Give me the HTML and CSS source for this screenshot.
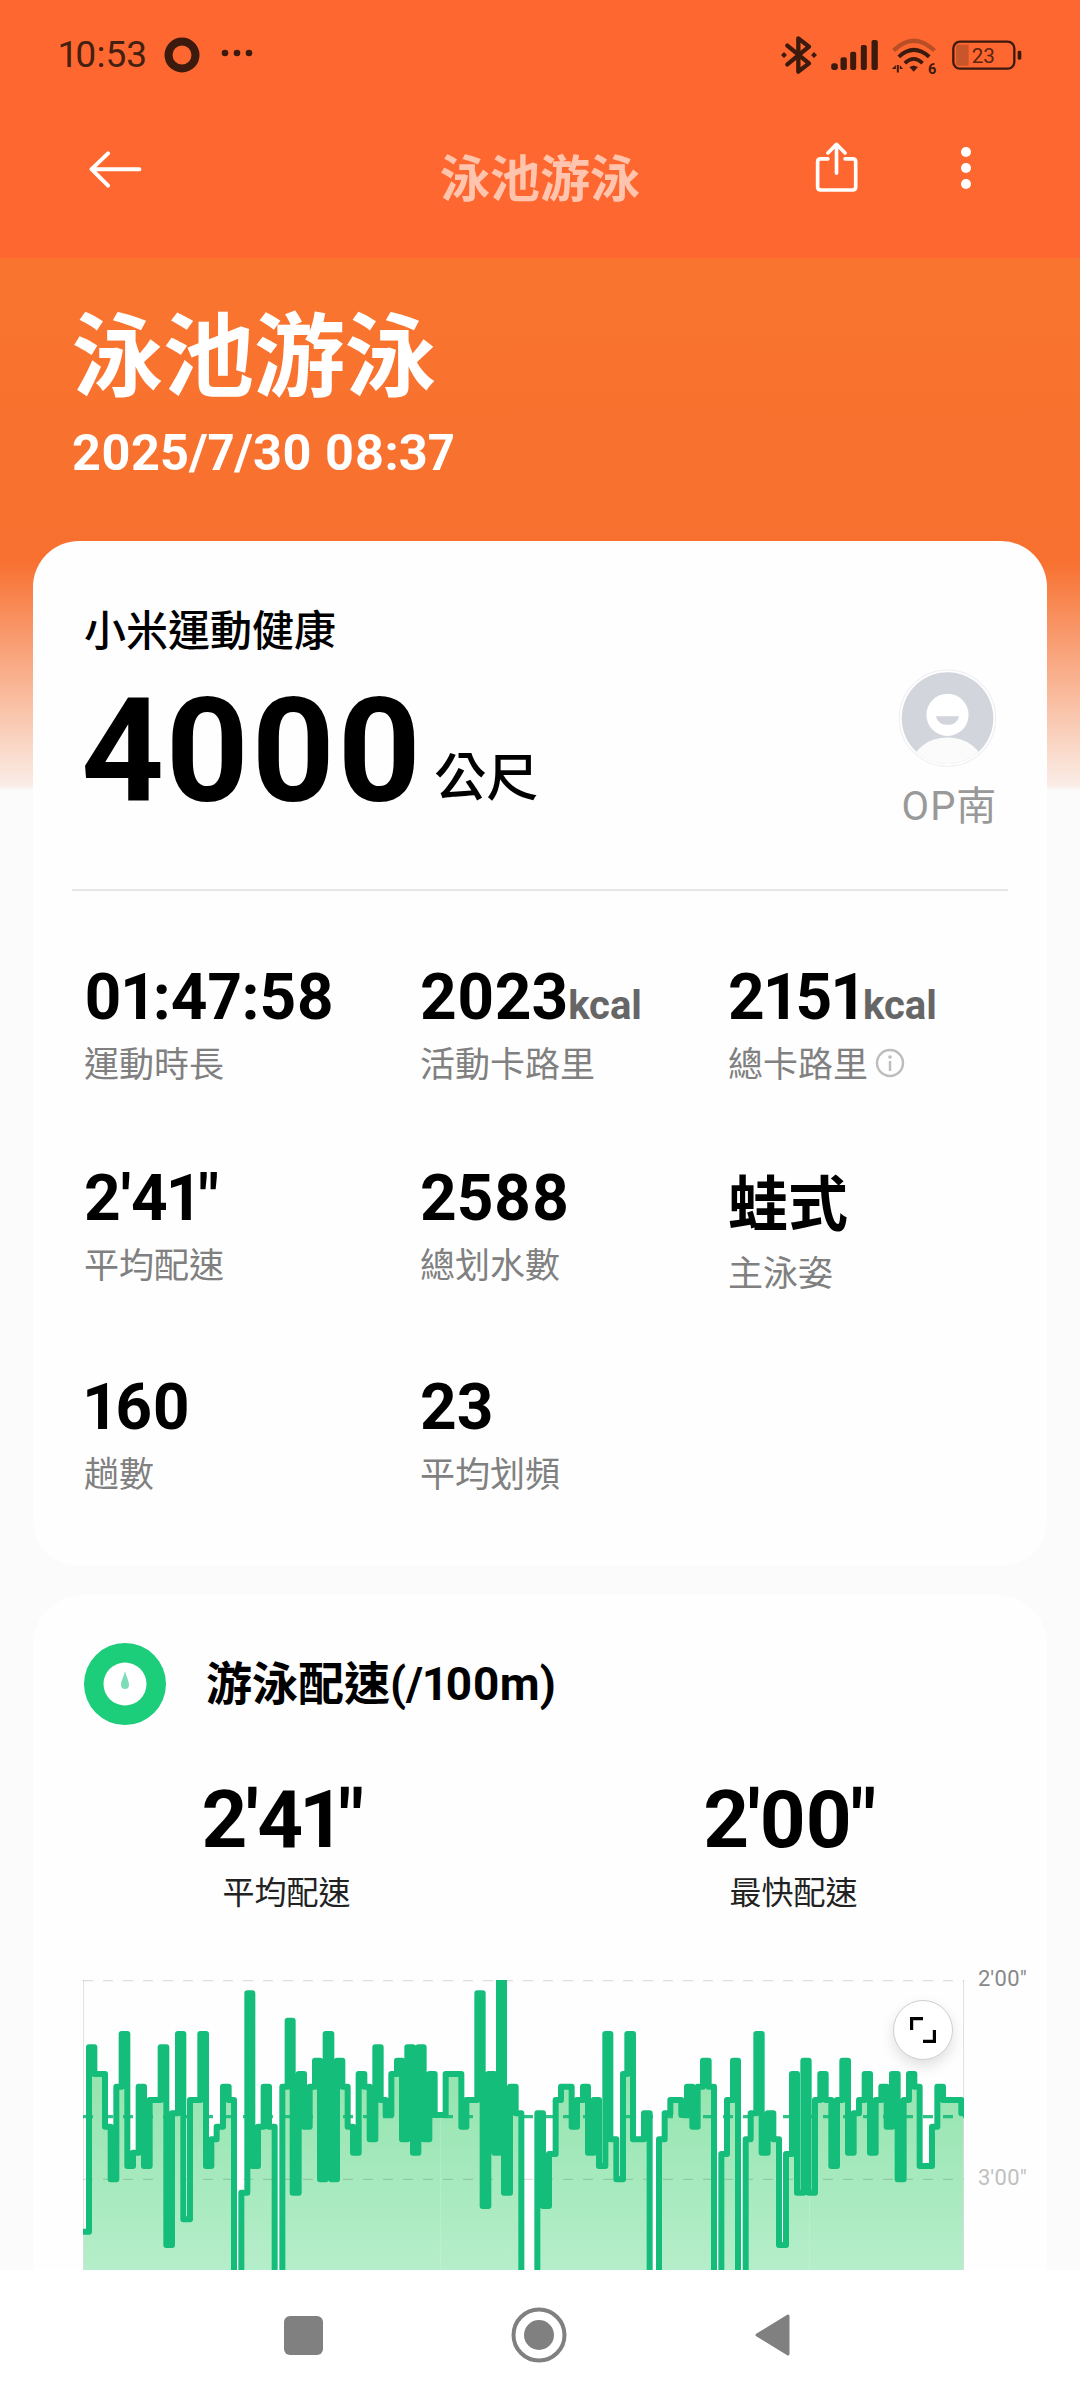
FILE: index.html
```html
<!DOCTYPE html>
<html lang="zh-Hant">
<head>
<meta charset="utf-8">
<title>泳池游泳</title>
<link rel="stylesheet" href="styles.css">
</head>
<body>
<div class="screen">
  <main class="scroll">
    <header class="statusbar">
      <div class="status-left">
        <span class="clock">10:53</span>
        <svg class="ring" viewBox="0 0 36 36"><circle cx="18" cy="18" r="13.5" fill="none" stroke="#3c1a0e" stroke-width="8"/></svg>
        <svg class="more" viewBox="0 0 32 8"><circle cx="4" cy="4" r="3.3"/><circle cx="16" cy="4" r="3.3"/><circle cx="28" cy="4" r="3.3"/></svg>
      </div>
      <div class="status-right">
        <svg class="ic-bt" viewBox="60 40 120 120"><path d="M85 72 L150 125 L118 150 V50 L150 75 L85 128" fill="none" stroke="#3c1a0e" stroke-width="13" stroke-linejoin="round" stroke-linecap="round"/><path d="M66 100 l9-9 9 9-9 9zM156 100 l9-9 9 9-9 9z" fill="#3c1a0e"/></svg>
        <svg class="ic-signal" viewBox="215 60 140 90"><rect x="215" y="130" width="20" height="20" rx="8"/><rect x="243" y="112" width="19" height="38" rx="6"/><rect x="272" y="95" width="18" height="55" rx="6"/><rect x="304" y="75" width="18" height="75" rx="6"/><rect x="336" y="60" width="19" height="90" rx="6"/></svg>
        <svg class="ic-wifi" viewBox="395 50 150 124"><path d="M402 88 Q463 28 526 88" fill="none" stroke="#b84e25" stroke-width="13"/><path d="M418 107 Q463 65 510 107" fill="none" stroke="#3c1a0e" stroke-width="12"/><path d="M436 126 Q463 100 490 126" fill="none" stroke="#3c1a0e" stroke-width="11"/><path d="M450 138 L463 133 L476 138 L463 152Z" fill="#3c1a0e"/><path d="M397 144 h12 v-12zM412 132 h6 v22 h-6zM421 132 l10 12 h-10z" fill="#3c1a0e"/><text x="506" y="160" class="wifi-six">6</text></svg>
        <svg class="ic-batt" viewBox="578 56 210 90"><rect x="582" y="61" width="183" height="81" rx="20" fill="none" stroke="#3c1a0e" stroke-width="7"/><path d="M594 70 h34 v63 h-34 q-4 0-4-4 v-55 q0-4 4-4z" fill="#c9552a"/><rect x="775" y="88" width="11" height="27" rx="4" fill="#3c1a0e"/><text x="672" y="126" class="batt-text">23</text></svg>
      </div>
    </header>

    <nav class="navbar">
      <svg class="ic-back" viewBox="175 390 165 112"><path d="M330 445 H185 M235 397 L185 445 L235 495" fill="none" stroke="#fff" stroke-width="12" stroke-linecap="round" stroke-linejoin="round"/></svg>
      <span class="nav-title">泳池游泳</span>
      <div class="nav-actions">
        <svg class="ic-share" viewBox="160 358 142 160"><path d="M205 412 H183 Q174 412 174 421 V497 Q174 506 183 506 H280 Q289 506 289 497 V421 Q289 412 280 412 H257 M231 455 V370 M205 394 L231 368 L257 394" fill="none" stroke="#fff" stroke-width="11" stroke-linecap="round" stroke-linejoin="round"/></svg>
        <svg class="ic-kebab" viewBox="0 0 12 42"><circle cx="6" cy="5" r="5"/><circle cx="6" cy="21" r="5"/><circle cx="6" cy="37" r="5"/></svg>
      </div>
    </nav>

    <section class="hero">
      <h1 class="hero-title">泳池游泳</h1>
      <p class="hero-date">2025/7/30 08:37</p>
    </section>

    <section class="card">
      <div class="summary">
        <div class="summary-main">
          <div class="source">小米運動健康</div>
          <div class="distance"><span class="distance-num">4000</span><span class="distance-unit">公尺</span></div>
        </div>
        <div class="profile">
          <svg class="avatar" viewBox="120 85 296 296"><defs><clipPath id="avatar-clip"><circle cx="268" cy="232" r="137"/></clipPath></defs><circle cx="268" cy="232" r="144" fill="#fff" stroke="#eceef2" stroke-width="3"/><circle cx="268" cy="232" r="137" fill="#d3d5dd"/><g clip-path="url(#avatar-clip)"><circle cx="268" cy="222" r="63" fill="#fff"/><ellipse cx="268" cy="370" rx="105" ry="80" fill="#fbfbfb"/></g><path d="M233 226 H303 Q296 252 268 252 Q240 252 233 226Z" fill="#d3d5dd"/></svg>
          <span class="profile-name">OP南</span>
        </div>
      </div>
      <div class="divider"></div>
      <div class="stats">
        <div class="stat"><div class="stat-value">01:47:58</div><div class="stat-label">運動時長</div></div>
        <div class="stat"><div class="stat-value">2023<span class="unit">kcal</span></div><div class="stat-label">活動卡路里</div></div>
        <div class="stat"><div class="stat-value">2151<span class="unit">kcal</span></div><div class="stat-label">總卡路里<svg class="ic-info" viewBox="0 0 30 30"><circle cx="15" cy="15" r="13" fill="none" stroke="#bdbdbd" stroke-width="2.4"/><circle cx="15" cy="9" r="1.8" fill="#bdbdbd"/><rect x="13.8" y="13" width="2.4" height="10" fill="#bdbdbd"/></svg></div></div>
        <div class="stat"><div class="stat-value">2'41"</div><div class="stat-label">平均配速</div></div>
        <div class="stat"><div class="stat-value">2588</div><div class="stat-label">總划水數</div></div>
        <div class="stat"><div class="stat-value stat-value-cjk">蛙式</div><div class="stat-label">主泳姿</div></div>
        <div class="stat"><div class="stat-value">160</div><div class="stat-label">趟數</div></div>
        <div class="stat"><div class="stat-value">23</div><div class="stat-label">平均划頻</div></div>
      </div>
    </section>

    <section class="card card-pace">
      <div class="pace-head">
        <svg class="ic-pace" viewBox="0 0 82 82"><circle cx="41" cy="41" r="41" fill="#1ccd7a"/><circle cx="41" cy="41" r="21.5" fill="#fff"/><path d="M41 28 C42.5 34 45 38 45 42 A4 4 0 0 1 37 42 C37 38 39.5 34 41 28Z" fill="#7fdcb8"/></svg>
        <h2 class="pace-title">游泳配速(/100m)</h2>
      </div>
      <div class="pace-metrics">
        <div class="metric"><div class="metric-value">2'41"</div><div class="metric-label">平均配速</div></div>
        <div class="metric"><div class="metric-value">2'00"</div><div class="metric-label">最快配速</div></div>
      </div>
      <div class="chart">
        <svg class="chart-svg" viewBox="70 60 2643 870" preserveAspectRatio="none">
          <defs>
            <linearGradient id="pace-fill" x1="0" y1="0" x2="0" y2="1"><stop offset="0" stop-color="#86dfa2"/><stop offset="1" stop-color="#b5eeca"/></linearGradient>
          </defs>
          <path fill="url(#pace-fill)" d="M70 930 V815 H88 V262 H104 V342 H136 V500 H153 V658 H170 V380 H186 V222 H203 V618 H220 V578 H237 V380 H253 V618 H270 V420 H303 V262 H320 V855 H337 V460 H355 V222 H371 V778 H391 V420 H422 V222 H439 V618 H455 V538 H471 V500 H490 V380 H507 V420 H523 V930 H545 V698 H563 V100 H578 V618 H595 V500 H612 V380 H628 V500 H645 V930 H668 V380 H684 V182 H699 V698 H717 V342 H733 V500 H750 V380 H766 V302 H781 V658 H798 V222 H815 V658 H832 V302 H848 V380 H864 V500 H880 V578 H897 V342 H914 V380 H930 V538 H947 V262 H963 V420 H978 V465 H995 V342 H1012 V302 H1027 V538 H1043 V262 H1060 V578 H1076 V262 H1092 V538 H1109 V342 H1125 V465 H1158 V342 H1205 V500 H1220 V420 H1253 V100 H1269 V738 H1286 V342 H1304 V578 H1318 V62 H1333 V698 H1351 V380 H1368 V460 H1385 V930 H1433 V460 H1450 V738 H1468 V582 H1488 V420 H1504 V380 H1536 V500 H1552 V420 H1570 V380 H1585 V578 H1602 V420 H1618 V618 H1637 V222 H1652 V538 H1670 V658 H1690 V342 H1703 V222 H1720 V538 H1753 V460 H1770 V930 H1798 V538 H1815 V460 H1832 V420 H1865 V465 H1882 V380 H1898 V500 H1914 V380 H1930 V302 H1947 V380 H1963 V930 H1985 V582 H2002 V420 H2020 V302 H2035 V930 H2058 V538 H2073 V460 H2090 V222 H2106 V578 H2124 V460 H2141 V538 H2158 V855 H2179 V582 H2197 V342 H2212 V698 H2231 V302 H2247 V698 H2266 V420 H2282 V342 H2298 V420 H2315 V618 H2332 V420 H2348 V302 H2365 V578 H2382 V460 H2398 V420 H2415 V342 H2431 V578 H2448 V420 H2465 V380 H2481 V500 H2497 V342 H2514 V658 H2532 V420 H2548 V342 H2564 V380 H2580 V618 H2617 V500 H2633 V380 H2650 V420 H2705 V460 H2713 V930Z"/>
          <path class="grid-faint" d="M1142 60 V930 M2250 60 V930"/>
          <path class="grid-edge" d="M71 60 V930 M2712 60 V930"/>
          <path class="grid-dash" d="M70 62 H2713 M70 658 H2713"/>
          <path class="grid-avg" d="M70 470 H2713"/>
          <path class="pace-line" d="M70 815 H88 V262 H104 V342 H136 V500 H153 V658 H170 V380 H186 V222 H203 V618 H220 V578 H237 V380 H253 V618 H270 V420 H303 V262 H320 V855 H337 V460 H355 V222 H371 V778 H391 V420 H422 V222 H439 V618 H455 V538 H471 V500 H490 V380 H507 V420 H523 V960 H545 V698 H563 V100 H578 V618 H595 V500 H612 V380 H628 V500 H645 V960 H668 V380 H684 V182 H699 V698 H717 V342 H733 V500 H750 V380 H766 V302 H781 V658 H798 V222 H815 V658 H832 V302 H848 V380 H864 V500 H880 V578 H897 V342 H914 V380 H930 V538 H947 V262 H963 V420 H978 V465 H995 V342 H1012 V302 H1027 V538 H1043 V262 H1060 V578 H1076 V262 H1092 V538 H1109 V342 H1125 V465 H1158 V342 H1205 V500 H1220 V420 H1253 V100 H1269 V738 H1286 V342 H1304 V578 H1318 V62 H1333 V698 H1351 V380 H1368 V460 H1385 V960 M1433 960 V460 H1450 V738 H1468 V582 H1488 V420 H1504 V380 H1536 V500 H1552 V420 H1570 V380 H1585 V578 H1602 V420 H1618 V618 H1637 V222 H1652 V538 H1670 V658 H1690 V342 H1703 V222 H1720 V538 H1753 V460 H1770 V960 M1798 960 V538 H1815 V460 H1832 V420 H1865 V465 H1882 V380 H1898 V500 H1914 V380 H1930 V302 H1947 V380 H1963 V960 M1985 960 V582 H2002 V420 H2020 V302 H2035 V960 M2058 960 V538 H2073 V460 H2090 V222 H2106 V578 H2124 V460 H2141 V538 H2158 V855 H2179 V582 H2197 V342 H2212 V698 H2231 V302 H2247 V698 H2266 V420 H2282 V342 H2298 V420 H2315 V618 H2332 V420 H2348 V302 H2365 V578 H2382 V460 H2398 V420 H2415 V342 H2431 V578 H2448 V420 H2465 V380 H2481 V500 H2497 V342 H2514 V658 H2532 V420 H2548 V342 H2564 V380 H2580 V618 H2617 V500 H2633 V380 H2650 V420 H2705 V460 H2713"/>
        </svg>
        <span class="axis axis-top">2'00"</span>
        <span class="axis axis-mid">3'00"</span>
        <button class="expand" type="button" aria-label="expand"><svg viewBox="0 0 26 26"><path d="M13 1.5 H1.5 V13 M13 24.5 H24.5 V13" fill="none" stroke="#000" stroke-width="3.4"/></svg></button>
      </div>
    </section>
  </main>
  <footer class="navkeys">
    <span class="key-square"></span>
    <svg class="key-home" viewBox="0 0 56 56"><circle cx="28" cy="28" r="25.5" fill="none" stroke="#808080" stroke-width="4"/><circle cx="28" cy="28" r="15" fill="#808080"/></svg>
    <svg class="key-back" viewBox="0 0 38 46"><path d="M34 4 V42 L3 23Z" fill="#808080" stroke="#808080" stroke-width="3" stroke-linejoin="round"/></svg>
  </footer>
</div>
</body>
</html>
```
FILE: styles.css
```css
* { box-sizing: border-box; }
html, body { margin: 0; padding: 0; }
body {
  width: 1080px;
  height: 2400px;
  font-family: Roboto, "Noto Sans CJK TC", sans-serif;
  font-variant-numeric: proportional-nums;
  color: #000;
  background: #fbfbfb;
}
.screen { width: 1080px; height: 2400px; display: flex; flex-direction: column; overflow: hidden; }
.scroll {
  flex: 1;
  min-height: 0;
  overflow: hidden;
  background: linear-gradient(#ff6730 0 258px, #f9752f 258px, #f8702f 560px, #faede7 786px, #fbfbfb 790px);
}

.statusbar { height: 110px; padding: 0 58px 0 59px; display: flex; justify-content: space-between; align-items: center; }
.status-left { display: flex; align-items: center; }
.clock { font-size: 37px; color: #43200f; line-height: 40px; }
.ring { width: 36px; height: 36px; margin-left: 17px; }
.more { width: 32px; height: 8px; margin-left: 21px; margin-top: -4px; fill: #3c1a0e; }
.status-right { display: flex; align-items: center; }
.ic-bt { width: 40px; height: 40px; margin-right: 12px; }
.ic-signal { width: 47px; height: 30px; margin-right: 13px; fill: #3c1a0e; }
.ic-wifi { width: 50px; height: 41px; margin-right: 11px; margin-top: 6px; }
.wifi-six { font: 700 44px Roboto, sans-serif; fill: #3c1a0e; }
.ic-batt { width: 70px; height: 30px; }
.batt-text { font: 400 62px Roboto, sans-serif; fill: #5a2410; text-anchor: middle; }

.navbar { height: 148px; padding: 0 108px 0 88px; display: grid; grid-template-columns: 1fr auto 1fr; align-items: center; }
.ic-back { width: 55px; height: 37px; margin-top: -30px; }
.nav-title { font-size: 50px; font-weight: 700; color: #ffc4ad; line-height: 60px; margin: -8px 0 0 0; transform: translateX(10px); }
.nav-actions { display: flex; justify-content: flex-end; align-items: center; margin-top: -30px; }
.ic-share { width: 47px; height: 53px; margin-right: 100px; margin-top: -4px; }
.ic-kebab { width: 12px; height: 42px; fill: #fff; margin-top: -2px; }

.hero { padding: 52px 0 58px 72px; color: #fff; }
.hero-title { margin: 0; font-size: 91px; line-height: 96px; font-weight: 700; }
.hero-date { margin: 17px 0 0; font-size: 50.5px; line-height: 60px; font-weight: 700; }

.card { margin: 0 33px; background: #fefefe; border-radius: 46px; }
.summary { display: flex; justify-content: space-between; padding: 66px 50px 60px 51px; }
.source { font-size: 42px; line-height: 50px; font-weight: 500; }
.distance { margin-top: 22px; margin-bottom: -2px; display: flex; align-items: flex-end; }
.distance-num { font-size: 145px; line-height: 145px; font-weight: 700; margin-left: -3px; }
.distance-unit { font-size: 52px; line-height: 60px; font-weight: 500; margin-left: 12px; margin-bottom: 15px; }
.profile { display: flex; flex-direction: column; align-items: center; padding-top: 62px; }
.avatar { width: 99px; height: 99px; }
.profile-name { font-size: 40px; line-height: 44px; letter-spacing: 1px; color: #999; margin-top: 17px; margin-right: -4px; }
.divider { height: 2px; margin: 0 39px; background: #e6e6e6; }

.stats { display: grid; grid-template-columns: 336px 308px 1fr; row-gap: 76px; padding: 72px 50px 68px 51px; }
.stat-value { height: 70px; font-size: 64px; line-height: 70px; font-weight: 700; white-space: nowrap; }
.stat-value-cjk { height: 84px; font-size: 60px; line-height: 84px; margin-bottom: -6px; }
.unit { font-size: 40px; color: #666; font-weight: 700; }
.stat-label { margin-top: 11px; font-size: 35px; line-height: 44px; color: #808080; display: flex; align-items: center; white-space: nowrap; }
.ic-info { width: 30px; height: 30px; margin-left: 7px; margin-top: -6px; }

.card-pace { margin-top: 29px; padding: 48px 50px 0 51px; border-radius: 50px 50px 0 0; }
.pace-head { display: flex; align-items: center; }
.ic-pace { width: 82px; height: 82px; flex: none; }
.pace-title { margin: 0 0 0 40px; font-size: 46px; line-height: 60px; font-weight: 700; }
.pace-metrics { display: grid; grid-template-columns: 507px 507px; margin: 50px -50px 0 -51px; }
.metric { text-align: center; }
.metric-value { font-size: 80px; line-height: 90px; font-weight: 700; letter-spacing: -1.5px; margin-left: -9px; }
.metric-label { margin-top: 8px; font-size: 32px; line-height: 40px; color: #222; }
.chart { position: relative; width: 881px; height: 290px; margin: 67px 0 0 -1px; }
.chart-svg { display: block; width: 881px; height: 290px; overflow: hidden; }
.grid-faint { stroke: #ffffff; stroke-opacity: .18; stroke-width: 3; fill: none; }
.grid-edge { stroke: #dcdcdc; stroke-width: 3; fill: none; }
.grid-dash { stroke: #000; stroke-opacity: .13; stroke-width: 4; stroke-dasharray: 30 30; fill: none; }
.grid-avg { stroke: #19bb7a; stroke-opacity: .9; stroke-width: 10; stroke-dasharray: 30 30; fill: none; }
.pace-line { stroke: #14bd79; stroke-width: 18; fill: none; stroke-linejoin: round; }
.axis { position: absolute; left: 895px; font-size: 22px; line-height: 26px; white-space: nowrap; }
.axis-top { top: -14px; color: #888; }
.axis-mid { top: 185px; color: #c0c0c0; }
.expand {
  position: absolute;
  left: 810px;
  top: 20px;
  width: 60px;
  height: 60px;
  padding: 0;
  border: 1px solid #cfcfcf;
  border-radius: 50%;
  background: #fff;
  box-shadow: 0 6px 14px rgba(0,0,0,.12);
  display: flex;
  align-items: center;
  justify-content: center;
}
.expand svg { width: 26px; height: 26px; }

.navkeys { height: 130px; flex: none; background: #fff; display: grid; grid-template-columns: 304px 90px 1fr; }
.key-square { width: 39px; height: 39px; border-radius: 6px; background: #808080; margin: 46px 0 0 284px; }
.key-home { width: 56px; height: 56px; margin: 37px 0 0 207px; }
.key-back { width: 38px; height: 46px; margin: 42px 0 0 360px; }
```
